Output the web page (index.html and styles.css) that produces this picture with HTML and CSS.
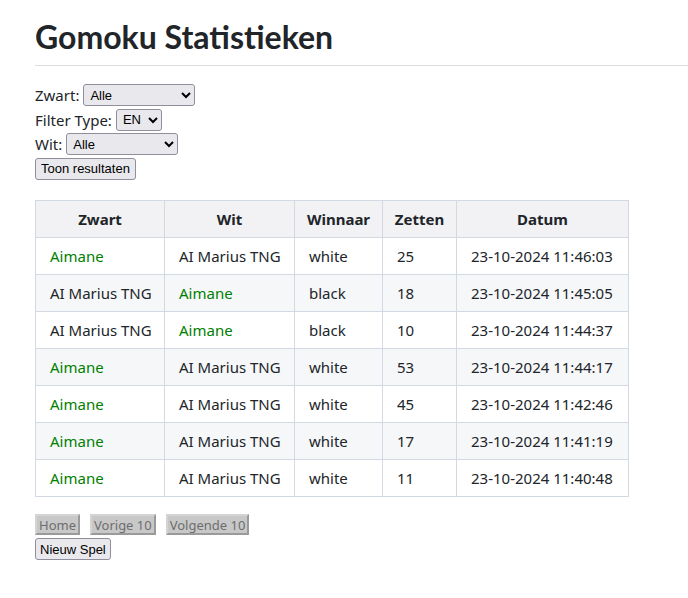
FILE: index.html
```html
<!DOCTYPE html>
<html lang="nl">
<head>
<meta charset="utf-8">
<title>Gomoku Statistieken</title>
<link rel="stylesheet" href="styles.css">
</head>
<body>
<div class="page">
  <h1 class="title">Gomoku Statistieken</h1>
  <form class="filters">
    <div class="row"><label>Zwart:</label> <select class="sel sel-wide"><option>Alle</option></select></div>
    <div class="row"><label>Filter Type:</label> <select class="sel sel-small"><option>EN</option></select></div>
    <div class="row"><label>Wit:</label> <select class="sel sel-wide"><option>Alle</option></select></div>
    <div class="row"><button type="button" class="btn">Toon resultaten</button></div>
  </form>
  <table class="stats">
    <thead>
      <tr><th class="c1">Zwart</th><th class="c2">Wit</th><th class="c3">Winnaar</th><th class="c4">Zetten</th><th class="c5">Datum</th></tr>
    </thead>
    <tbody>
      <tr><td class="me">Aimane</td><td>AI Marius TNG</td><td>white</td><td>25</td><td>23-10-2024 11:46:03</td></tr>
      <tr><td>AI Marius TNG</td><td class="me">Aimane</td><td>black</td><td>18</td><td>23-10-2024 11:45:05</td></tr>
      <tr><td>AI Marius TNG</td><td class="me">Aimane</td><td>black</td><td>10</td><td>23-10-2024 11:44:37</td></tr>
      <tr><td class="me">Aimane</td><td>AI Marius TNG</td><td>white</td><td>53</td><td>23-10-2024 11:44:17</td></tr>
      <tr><td class="me">Aimane</td><td>AI Marius TNG</td><td>white</td><td>45</td><td>23-10-2024 11:42:46</td></tr>
      <tr><td class="me">Aimane</td><td>AI Marius TNG</td><td>white</td><td>17</td><td>23-10-2024 11:41:19</td></tr>
      <tr><td class="me">Aimane</td><td>AI Marius TNG</td><td>white</td><td>11</td><td>23-10-2024 11:40:48</td></tr>
    </tbody>
  </table>
  <div class="pager">
    <button type="button" class="pbtn" disabled>Home</button>
    <button type="button" class="pbtn" disabled>Vorige 10</button>
    <button type="button" class="pbtn" disabled>Volgende 10</button>
  </div>
  <div class="newgame"><button type="button" class="btn">Nieuw Spel</button></div>
</div>
</body>
</html>
```

FILE: styles.css
```css
html, body {
  margin: 0;
  padding: 0;
  background: #ffffff;
}
body {
  font-family: "Noto Sans", "Open Sans", sans-serif;
  color: #212529;
}
.page {
  padding: 0 0 0 35px;
}
.title {
  margin: 0;
  padding: 17px 0 8px 0;
  font-family: Lato, "Noto Sans", sans-serif;
  font-size: 32px;
  line-height: 40px;
  font-weight: 700;
  border-bottom: 1px solid #dcdcdc;
}
.filters {
  margin-top: 17px;
  font-size: 15px;
}
.row {
  height: 24.5px;
  display: flex;
  align-items: center;
  gap: 4px;
}
.row label {
  line-height: 20px;
}
.sel {
  font-family: "Liberation Sans", Arial, sans-serif;
  font-size: 13px;
  height: 22px;
  border: 1px solid #8f8f9d;
  border-radius: 3px;
  background: #e9e9ed;
  color: #000;
  padding: 0 2px;
}
.sel-wide { width: 112px; }
.sel-small { width: 46px; }
.btn {
  font-family: "Liberation Sans", Arial, sans-serif;
  font-size: 13px;
  height: 22px;
  padding: 0 5px;
  border: 1px solid #8f8f9d;
  border-radius: 3px;
  background: #e9e9ed;
  color: #000;
}
.stats {
  margin-top: 19px;
  border-collapse: collapse;
  table-layout: fixed;
  width: 594px;
  font-size: 15px;
}
.stats th, .stats td {
  box-sizing: border-box;
  border: 1px solid #d3d9e2;
  height: 37px;
  padding: 0 14px;
  white-space: nowrap;
  overflow: hidden;
}
.stats th {
  background: #f2f2f4;
  font-weight: 700;
  text-align: center;
  padding: 0 4px;
}
.stats td {
  text-align: left;
}
.stats .c1 { width: 129px; }
.stats .c2 { width: 130px; }
.stats .c3 { width: 88px; }
.stats .c4 { width: 74px; }
.stats .c5 { width: 172px; }
.stats tbody tr:nth-child(even) td {
  background: #f6f7f9;
}
.stats td.me {
  color: #008000;
}
.pager {
  margin-top: 17px;
  display: flex;
  gap: 10px;
}
.pbtn {
  font-family: "Noto Sans", sans-serif;
  font-size: 13px;
  height: 21px;
  padding: 0 2px;
  background: #c8c8c8;
  color: #6d6d6d;
  border: 2px solid;
  border-color: #d4d4d4 #9a9a9a #9a9a9a #d4d4d4;
}
.newgame {
  margin-top: 3px;
  display: flex;
}
.newgame .btn {
  padding: 0 4px;
}
```
